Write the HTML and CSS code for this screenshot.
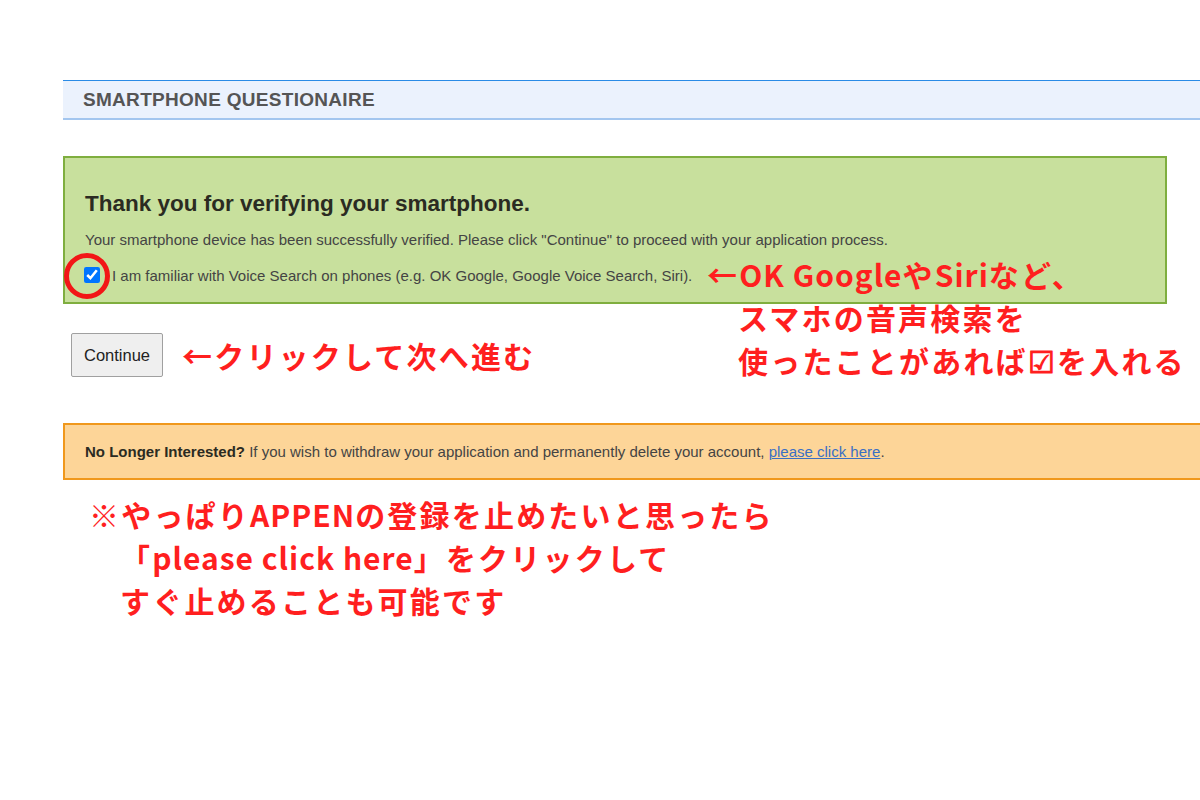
FILE: index.html
```html
<!DOCTYPE html>
<html lang="ja">
<head>
  <meta charset="UTF-8">
  <meta name="viewport" content="width=device-width, initial-scale=1.0">
  <title>Smartphone Questionaire</title>
  <link rel="stylesheet" href="styles.css">
</head>
<body>
  <div class="page">
    <div class="section-head">SMARTPHONE QUESTIONAIRE</div>

    <div class="verified">
      <h2>Thank you for verifying your smartphone.</h2>
      <p>Your smartphone device has been successfully verified. Please click "Continue" to proceed with your application process.</p>
      <label class="check-row">
        <input type="checkbox" checked>
        <span>I am familiar with Voice Search on phones (e.g. OK Google, Google Voice Search, Siri).</span>
      </label>
    </div>

    <div class="continue-row">
      <button class="btn-continue">Continue</button>
      <span class="note">←クリックして次へ進む</span>
    </div>

    <div class="withdraw">
      <b>No Longer Interested?</b> If you wish to withdraw your application and permanently delete your account, <a href="#">please click here</a>.
    </div>

    <div class="note note-block">
      <div>※やっぱり<span class="latin">APPEN</span>の登録を止めたいと思ったら</div>
      <div class="indent">「<span class="latin">please click here</span>」をクリックして</div>
      <div class="indent">すぐ止めることも可能です</div>
    </div>

    <!-- 注釈（スクリーンショットの上に重ねる） -->
    <div class="mark-circle"></div>
    <div class="note note-voice">
      <div>←<span class="latin">OK Google</span>や<span class="latin">Siri</span>など、</div>
      <div class="indent">スマホの音声検索を</div>
      <div class="indent">使ったことがあれば☑を入れる</div>
    </div>
  </div>
</body>
</html>
```

FILE: styles.css
```css
body {
  margin: 0;
  font-family: "Liberation Sans", Arial, sans-serif;
  background: #fff;
}

.page {
  position: relative;
  padding: 80px 0 0 63px;
  height: 720px;
}

.section-head {
  display: flex;
  align-items: center;
  height: 37px;
  padding-left: 20px;
  background: #ebf2fd;
  border-top: 1px solid #2a8be6;
  border-bottom: 2px solid #a3c6ef;
  color: #555;
  font-size: 19px;
  letter-spacing: 0.3px;
  font-weight: bold;
}

.verified {
  margin: 36px 33px 0 0;
  padding: 0 20px 17px 19px;
  background: #c8e09d;
  border: 2px solid #7fae3f;
  color: #444;
}

.verified h2 {
  margin: 34px 0 0 1px;
  font-size: 22.5px;
  line-height: 24px;
  color: #2b2b22;
}

.verified p {
  margin: 15px 0 0 1px;
  font-size: 15px;
  line-height: 18px;
}

.check-row {
  display: flex;
  align-items: center;
  gap: 12px;
  margin-top: 16px;
  height: 20px;
  font-size: 15px;
}

.check-row input {
  width: 16px;
  height: 16px;
  margin: 0;
}

.continue-row {
  display: flex;
  align-items: center;
  gap: 19px;
  margin: 29px 0 0 8px;
}

.btn-continue {
  width: 92px;
  height: 44px;
  font-family: "Liberation Sans", Arial, sans-serif;
  font-size: 16.5px;
  color: #222;
  background: #efefef;
  border: 1px solid #a0a0a0;
  border-radius: 2px;
}

.withdraw {
  margin-top: 46px;
  height: 53px;
  line-height: 53px;
  padding-left: 20px;
  background: #fdd598;
  border: 2px solid #f0981c;
  border-right: none;
  color: #444;
  font-size: 15px;
}

.withdraw b {
  color: #2b2b22;
}

.withdraw a {
  color: #3a6fc4;
}

.note {
  font-family: "Noto Sans CJK JP", sans-serif;
  font-weight: 700;
  font-size: 30px;
  letter-spacing: 2.2px;
  line-height: 43px;
  color: #ff1f1f;
  white-space: nowrap;
}

.note .latin {
  letter-spacing: 1px;
}

.note .indent {
  padding-left: 31px;
}

.note-block {
  margin: 13px 0 0 26px;
}

.note-voice {
  position: absolute;
  left: 707px;
  top: 253px;
}

.mark-circle {
  position: absolute;
  left: 64px;
  top: 253px;
  width: 36px;
  height: 36px;
  border: 5px solid #f21616;
  border-radius: 50%;
}
```
